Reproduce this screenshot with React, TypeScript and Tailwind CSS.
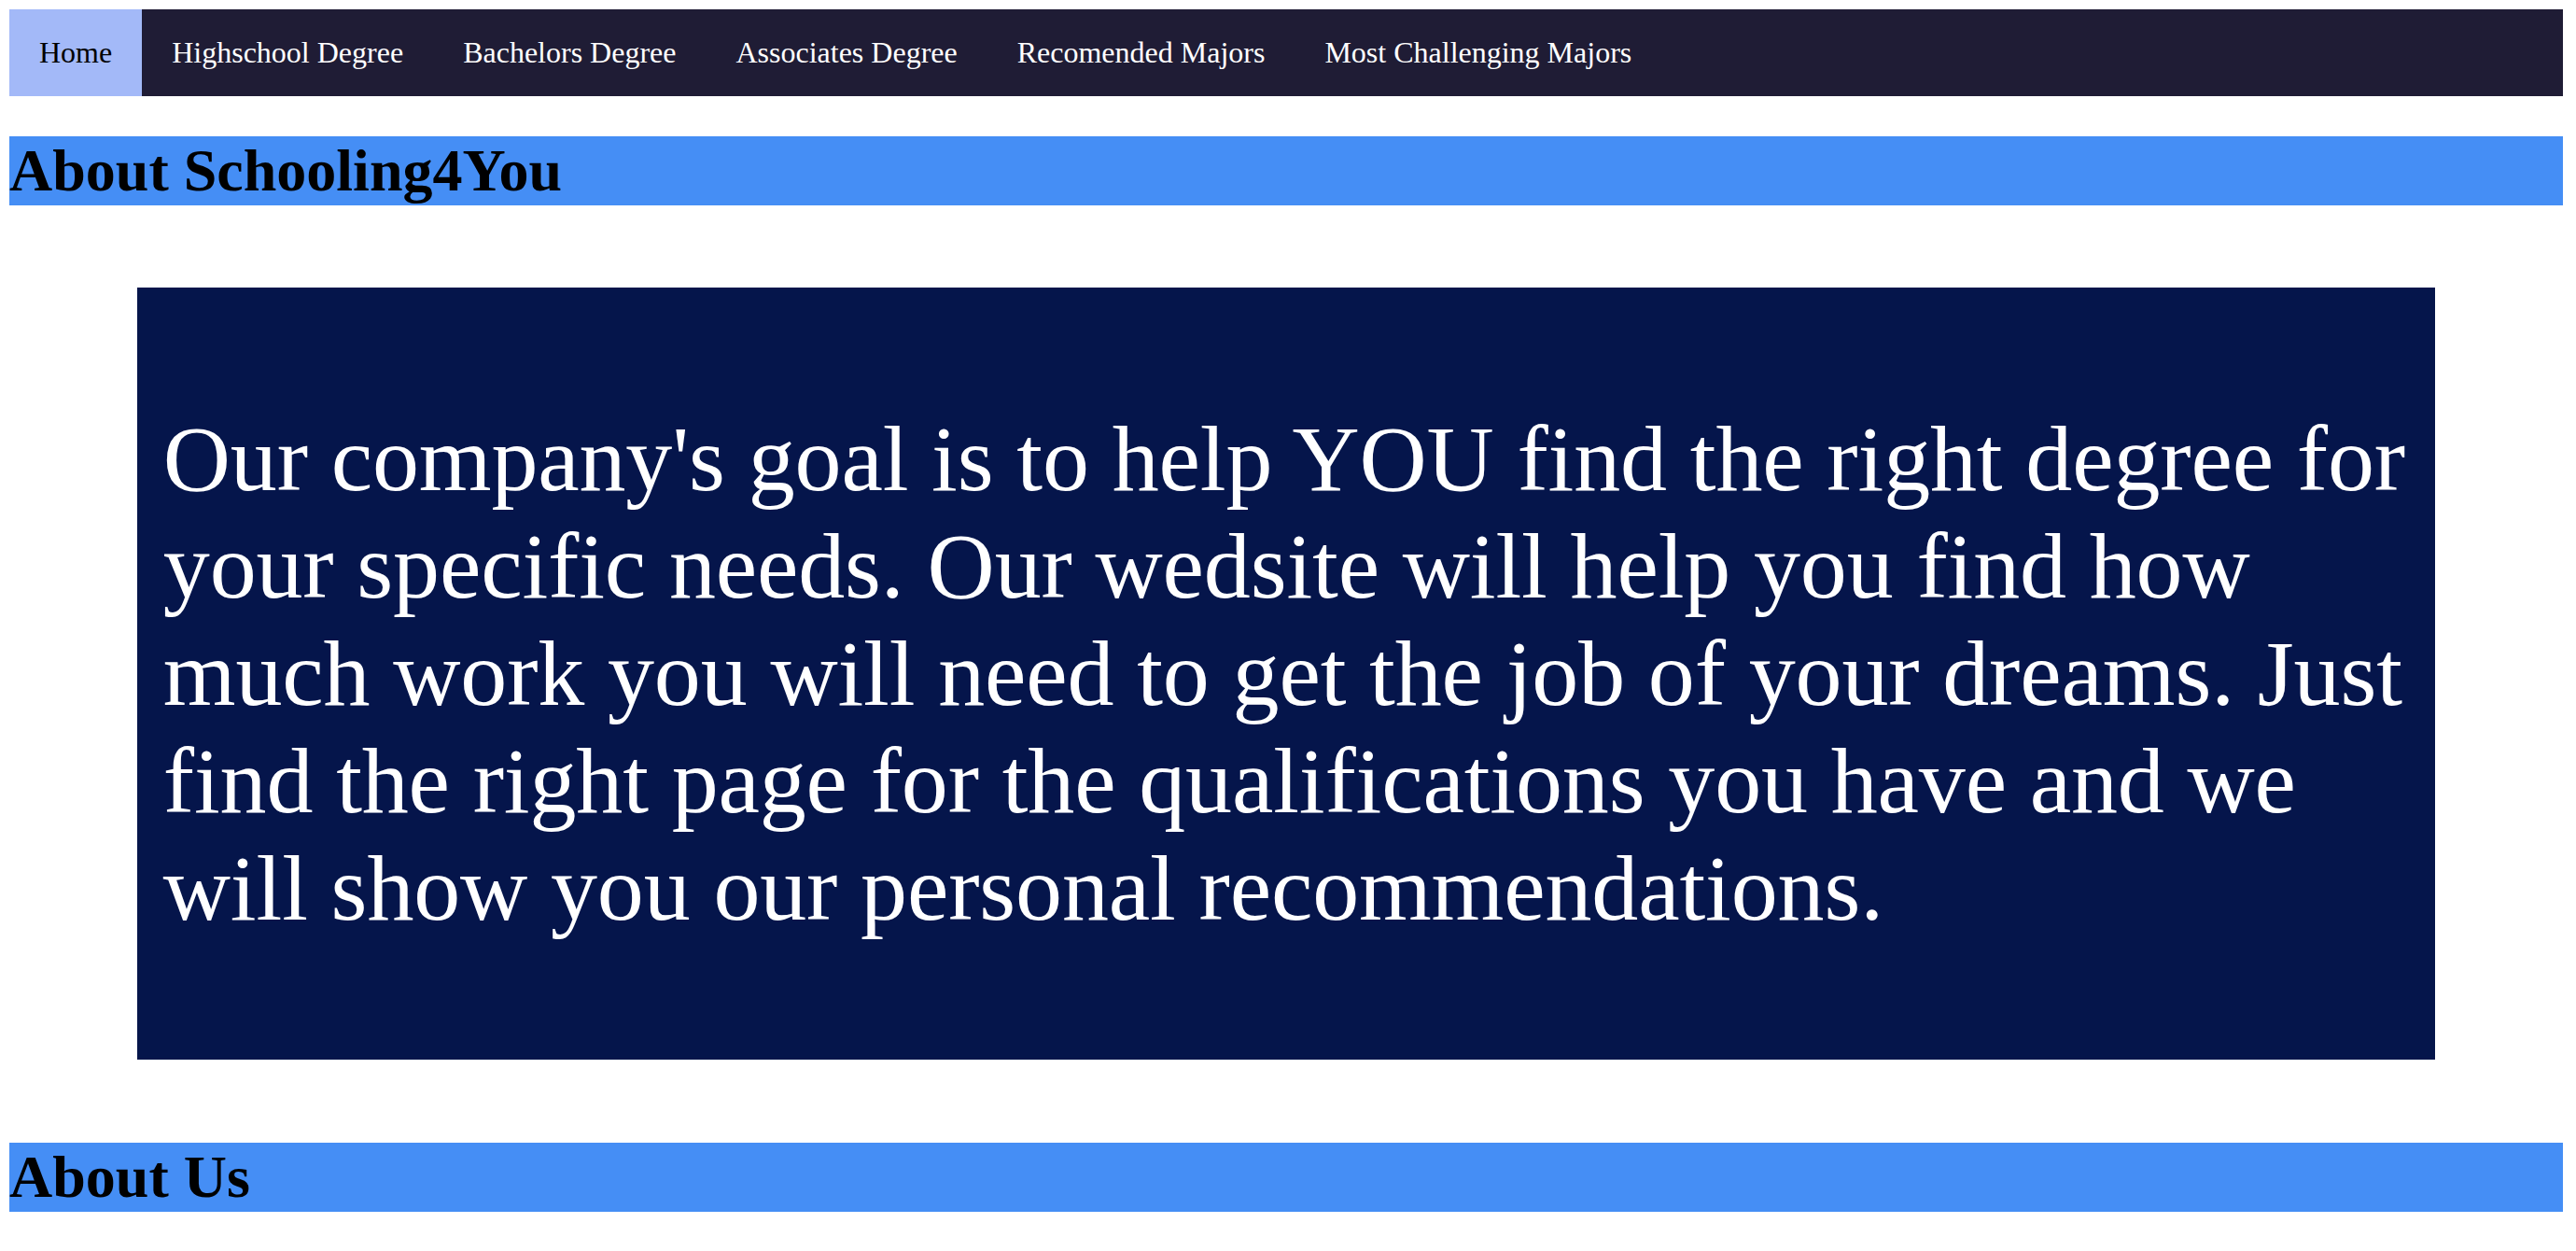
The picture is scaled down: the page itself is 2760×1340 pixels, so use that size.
import React from 'react';

const links = [
  'Home',
  'Highschool Degree',
  'Bachelors Degree',
  'Associates Degree',
  'Recomended Majors',
  'Most Challenging Majors',
];

// the reference wraps the statement with a slightly narrower Times, so keep its lines
const statement = [
  "Our company's goal is to help YOU find the right degree for",
  'your specific needs. Our wedsite will help you find how',
  'much work you will need to get the job of your dreams. Just',
  'find the right page for the qualifications you have and we',
  'will show you our personal recommendations.',
];

const serif = "font-['Liberation_Serif','Times_New_Roman',serif]";

export default function App() {
  return (
    <div className={`${serif} bg-white text-black pt-[10px] pl-[10px] pr-[14px] min-h-screen`}>
      {/* top navigation bar */}
      <nav className="flex bg-[#1f1c35]">
        {links.map((label, i) => (
          <a
            key={label}
            href="#"
            className={
              i === 0
                ? 'block px-[32px] py-[28px] text-[32px] leading-[36.8px] bg-[#a3b9f8] text-black'
                : 'block px-[32px] py-[28px] text-[32px] leading-[36.8px] text-white'
            }
          >
            {label}
          </a>
        ))}
      </nav>

      <h1 className="mt-[43px] bg-[#458ef5] text-[64px] leading-[74px] font-bold">
        About Schooling4You
      </h1>

      {/* mission statement */}
      <div className="w-[90%] mx-auto mt-[88px] mb-[89px] bg-[#05154b] px-[28px] py-[126px]">
        <p className="text-[100px] leading-[115px] text-white whitespace-nowrap tracking-[-0.15px]">
          {statement.map((line) => (
            <span key={line} className="block">
              {line}
            </span>
          ))}
        </p>
      </div>

      <h1 className="bg-[#458ef5] text-[64px] leading-[74px] font-bold">About Us</h1>
    </div>
  );
}
